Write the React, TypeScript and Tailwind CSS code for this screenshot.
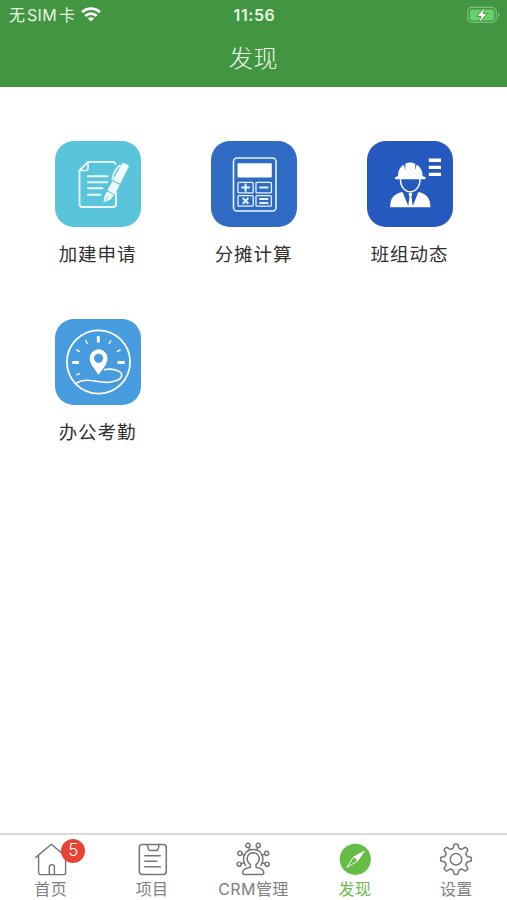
import React from "react";

interface AppEntry {
  label: string;
  tile: string;
  icon: React.ReactNode;
}

interface TabEntry {
  label: string;
  icon: React.ReactNode;
  active?: boolean;
  badge?: number;
}

const ApplyIcon = () => (
  <svg viewBox="0 0 86 86" className="h-full w-full" fill="none" stroke="#effcff" strokeLinecap="round" strokeLinejoin="round">
    <path d="M60.5 23Q60 20.8 57.5 20.8H33L24.5 29.5V63Q24.5 66 27.5 66H58Q61 66 61 63V52" strokeWidth="1.8" />
    <path d="M33 20.8V27Q33 29.5 30.5 29.5H24.5" strokeWidth="1.6" />
    <path d="M33 35.3H52.3M33 41.3H52.3M33 47.3H47.5M33 53.7H45.5" strokeWidth="1.9" />
    <path d="M65 24.5C61 27 58.5 32 57.3 38" strokeWidth="1.6" />
    <g fill="#effcff" stroke="none">
      <path d="M67.2 22.6Q68 21.6 69.3 22.2L73 24Q74.2 24.8 73.7 26L65.2 42.8L57.9 39.1Z" />
      <path d="M57.4 40L64.8 43.8L59.9 53.4L52.4 49.6Z" />
      <path d="M52 50.5L59 54.1L55.8 58.2L48.4 61.7L49.4 55.5Z" />
    </g>
    <path d="M49.4 60.5L53.3 55.6" stroke="#5bc4dd" strokeWidth=".7" />
  </svg>
);

const CalculatorIcon = () => (
  <svg viewBox="0 0 86 86" className="h-full w-full" fill="none" stroke="#e8f5ff">
    <rect x="22.5" y="17" width="42.5" height="53" rx="3.5" strokeWidth="1.6" />
    <rect x="26.5" y="22.2" width="34.3" height="14.2" rx=".8" fill="#fff" stroke="none" />
    <g strokeWidth="1.3">
      <rect x="27" y="41.3" width="15.2" height="10.6" rx="1" />
      <rect x="45" y="41.3" width="15.4" height="10.6" rx="1" />
      <rect x="27" y="54.6" width="15.2" height="10.6" rx="1" />
      <rect x="45" y="54.6" width="15.4" height="10.6" rx="1" />
    </g>
    <path d="M30.3 46.6H38.9M34.6 42.5V50.8M48.3 46.6H57.3M48.3 58.1H57.3M48.3 62H57.3" strokeWidth="2" />
    <path d="M31.8 57L37.4 62.8M37.4 57L31.8 62.8" strokeWidth="2" />
  </svg>
);

const WorkerIcon = () => (
  <svg viewBox="0 0 86 86" className="h-full w-full" fill="#fff">
    <path d="M61.8 17.6H74V21H61.8ZM61.8 24.7H74V27.9H61.8ZM61.8 31.8H74V35.1H61.8Z" />
    <path d="M28.8 38.3Q27.8 38.3 27.9 37.2Q28.1 35.7 29.8 35.5L31 35.2C31 29.5 33.2 25.6 37 23.8L38.2 29.3L38.4 22.7Q43 20.5 48.2 22.7L48.4 29.3L49.6 23.8C53.4 25.8 55.5 29.7 55.6 35.2L57 35.5Q58.6 35.8 58.7 37.2Q58.7 38.3 57.7 38.3Z" />
    <path d="M33.5 38C33.5 46 37.8 50.8 43.2 50.8S53 46 53 38" fill="none" stroke="#fff" strokeWidth="1.5" />
    <path d="M23.2 66.2C23.3 57 26.5 53.2 35.5 51.1L41.3 65L42.5 55.5L41.5 53L42.5 51.8H44.4L45.4 53L44.4 55.5L45.8 65L51.4 51.1C60 53 63.3 57.4 63.4 66.2Z" />
  </svg>
);

const AttendanceIcon = () => (
  <svg viewBox="0 0 86 86" className="h-full w-full" fill="none" stroke="#fff" strokeLinecap="butt">
    <circle cx="43.5" cy="43" r="31.6" strokeWidth="1.8" />
    <path d="M43.3 17V23.5M17.3 43.5H24M62.5 43.5H69.7" strokeWidth="2.8" />
    <path d="M30.5 21.3L32.6 25M56 21.3L54 25M21.2 30.6L25 32.8M65.6 30.6L61.9 32.8M21.3 56.2L25 54.3" strokeWidth="1.4" />
    <path d="M43.6 56C40.5 50.5 34.7 45.5 34.7 39.2A8.9 8.9 0 0 1 52.5 39.2C52.5 45.5 46.8 50.5 43.6 56ZM43.6 34.7A4.6 4.6 0 1 0 43.6 43.9A4.6 4.6 0 1 0 43.6 34.7Z" fill="#fff" stroke="none" fillRule="evenodd" />
    <path d="M21.2 64.2C32 57.5 42.5 64.5 54 63.2C62 62.2 67 59.6 66.7 55.6C66.3 51.5 57 49 48.8 50.8" strokeWidth="1.6" />
  </svg>
);

const HomeIcon = () => (
  <svg viewBox="0 0 36 36" className="size-9" fill="none" stroke="#757575" strokeWidth="1.4" strokeLinecap="round" strokeLinejoin="round">
    <path d="M2.8 16.4L18.4 3.3L32.6 15.4V31.8Q32.6 33.6 30.8 33.6H7.6Q5.6 33.6 5.6 31.6V14.4" />
    <path d="M16.3 33.3V26Q16.3 23.6 18.8 23.6T21.4 26V33.3" />
  </svg>
);

const ProjectIcon = () => (
  <svg viewBox="0 0 36 36" className="size-9" fill="none" stroke="#757575" strokeWidth="1.5" strokeLinecap="round" strokeLinejoin="round">
    <rect x="5.3" y="3.4" width="27" height="30.2" rx="3" />
    <path d="M13.2 3.6L14.5 8.3Q14.8 9.4 16 9.4H22.6Q23.8 9.4 24.1 8.3L25.2 3.6M10.8 14.8H26.3M10.8 20.2H22.8M10.8 25.8H26.3" />
  </svg>
);

const CrmIcon = () => (
  <svg viewBox="0 0 36 36" className="size-9" fill="none" stroke="#757575" strokeWidth="1.45" strokeLinecap="round" strokeLinejoin="round">
    <circle cx="12.9" cy="4.4" r="2.1" />
    <circle cx="23.3" cy="4.4" r="2.1" />
    <circle cx="4.9" cy="12.3" r="2.1" />
    <circle cx="31.6" cy="12.3" r="2.1" />
    <circle cx="4.2" cy="23.2" r="2.1" />
    <circle cx="32.1" cy="23.2" r="2.1" />
    <path d="M13.8 6.5L14.4 8.6M22.5 6.5L21.9 8.6M6.9 13.2L9.8 14.4M29.6 13.2L26.6 14.4M6.3 22.7L9.4 21.8M30 22.7L27 21.8" />
    <path d="M10.4 24.4C6 16.6 10 8.5 18.2 8.5S30.4 16.6 26 24.4" />
    <path d="M15.4 26.2V23.6C10 19.6 12 11.8 18.2 11.8S26.4 19.6 21 23.6V26.2C25.8 27 28.8 28.8 28.8 31.6Q28.8 33.5 26.8 33.5H9.6Q7.6 33.5 7.6 31.6C7.6 28.8 10.6 27 15.4 26.2Z" />
  </svg>
);

const CompassIcon = () => (
  <svg viewBox="0 0 36 36" className="size-9">
    <circle cx="18.3" cy="18.3" r="15.6" fill="#65bd45" />
    <path d="M27.4 10L20.4 20.2L9.8 26.4L16.4 16.2Z" fill="none" stroke="#fff" strokeWidth="1" strokeLinejoin="round" />
    <path d="M27.4 10L20.4 20.2L16.4 16.2Z" fill="#fff" />
    <circle cx="18.4" cy="18.2" r="1" fill="#65bd45" />
  </svg>
);

// one tooth of the gear, repeated every 45 degrees
const TOOTH = "M13.7 7.8Q15.1 7.6 15.5 6.2L15.9 4Q16.1 2.9 17 2.9H19Q19.9 2.9 20.1 4L20.5 6.2Q20.9 7.6 22.3 7.8";
const GEAR_ANGLES = [0, 45, 90, 135, 180, 225, 270, 315];

const SettingsIcon = () => (
  <svg viewBox="0 0 36 36" className="size-9" fill="none" stroke="#757575" strokeWidth="1.5" strokeLinejoin="round" strokeLinecap="round">
    {GEAR_ANGLES.map((angle) => (
      <path key={angle} d={TOOTH} transform={`rotate(${angle} 18 18.2)`} />
    ))}
    <circle cx="18" cy="18.2" r="5.7" />
  </svg>
);

const WifiIcon = () => (
  <svg viewBox="0 0 20 15" className="h-[15px] w-5" fill="none" stroke="#fff" strokeWidth="2.8">
    <path d="M1.1 5.2C6 .5 14 .5 18.9 5.2M4.3 8.9C7.6 5.8 12.4 5.8 15.7 8.9" />
    <path d="M10 14.6L6.9 11.5C8.6 9.9 11.4 9.9 13.1 11.5Z" fill="#fff" stroke="none" />
  </svg>
);

const BatteryIcon = () => (
  <svg viewBox="0 0 33 18" className="h-[18px] w-[33px]">
    <rect x=".7" y="1.4" width="28.6" height="15" rx="4.3" fill="none" stroke="#82bd80" strokeWidth="1.2" />
    <rect x="2.7" y="3.4" width="24.6" height="11" rx="2.5" fill="#68d26a" />
    <path d="M31 6.8Q32.5 7.6 32.5 9T31 11.2Z" fill="#82bd80" />
    <path d="M17.2 2.6L10.6 10H14.4L12.8 15.7L19.5 8.1H15.7Z" fill="#fff" stroke="#439641" strokeWidth="1.6" paintOrder="stroke" />
  </svg>
);

const apps: AppEntry[] = [
  { label: "加建申请", tile: "bg-[#5bc4dd]", icon: <ApplyIcon /> },
  { label: "分摊计算", tile: "bg-[#2f6bc3]", icon: <CalculatorIcon /> },
  { label: "班组动态", tile: "bg-[#2559be]", icon: <WorkerIcon /> },
  { label: "办公考勤", tile: "bg-[#469cdf]", icon: <AttendanceIcon /> },
];

const tabs: TabEntry[] = [
  { label: "首页", icon: <HomeIcon />, badge: 5 },
  { label: "项目", icon: <ProjectIcon /> },
  { label: "CRM管理", icon: <CrmIcon /> },
  { label: "发现", icon: <CompassIcon />, active: true },
  { label: "设置", icon: <SettingsIcon /> },
];

const Header: React.FC = () => {
  return (
    <header className="h-[87px] bg-[#439641] text-white">
      {/* Status bar */}
      <div className="grid h-[29px] grid-cols-3 items-center pl-[9px] pr-[7px]">
        <div className="flex items-center gap-[6px]">
          <span className="flex gap-[2px] text-[16px] leading-none text-[#e6f5e4]">
            <span>无</span>
            <span className="tracking-[0.3px]">SIM</span>
            <span>卡</span>
          </span>
          <WifiIcon />
        </div>
        <span className="text-center text-[16px] font-semibold leading-none tracking-[0.6px] text-[#e6f5e4]">11:56</span>
        <div className="flex justify-end">
          <BatteryIcon />
        </div>
      </div>
      <h1 className="pt-[12px] text-center text-[24px] font-light leading-[36px] tracking-[0.6px] text-[#eff9ee]">发现</h1>
    </header>
  );
};

const App: React.FC = () => {
  return (
    <div className="flex h-[900px] w-[507px] flex-col overflow-hidden bg-white font-['Inter','Noto_Sans_CJK_SC',sans-serif]">
      <Header />

      <main className="grid flex-1 auto-rows-[177.5px] grid-cols-3 px-[19.5px] pt-[54px]">
        {apps.map((app) => (
          <div key={app.label} className="flex flex-col items-center">
            <div className={`size-[86px] overflow-hidden rounded-[19px] ${app.tile}`}>{app.icon}</div>
            <span className="mt-[13px] text-[18.5px] leading-7 tracking-[0.9px] text-[#303030]">{app.label}</span>
          </div>
        ))}
      </main>

      {/* Bottom tabs */}
      <nav className="grid h-[67px] grid-cols-5 border-t-2 border-[#dadada]">
        {tabs.map((tab) => (
          <div key={tab.label} className="flex flex-col items-center pt-[6px]">
            <div className="relative">
              {tab.icon}
              {tab.badge && (
                <span className="absolute -top-[2.5px] left-[28.5px] flex size-6 items-center justify-center rounded-full bg-[#e64536] text-[17px] font-light leading-none text-white">
                  {tab.badge}
                </span>
              )}
            </div>
            <span className={`text-[16px] leading-6 tracking-[0.4px] ${tab.active ? "text-[#6fb94f]" : "text-[#808080]"}`}>
              {tab.label}
            </span>
          </div>
        ))}
      </nav>
    </div>
  );
};

export default App;
